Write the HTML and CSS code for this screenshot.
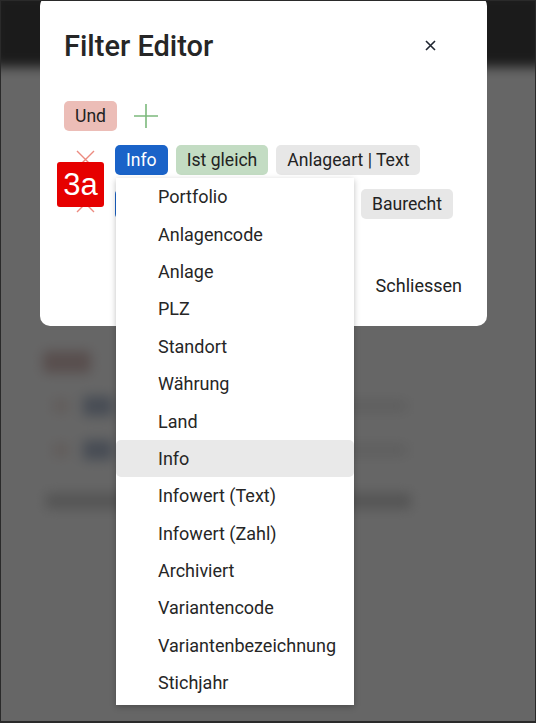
FILE: index.html
```html
<!DOCTYPE html>
<html lang="de">
<head>
    <meta charset="UTF-8">
    <title>Filter Editor</title>
    <link rel="stylesheet" href="styles.css">
</head>
<body>

<div class="frame">

    <!-- page behind the dialog, blurred and dimmed -->
    <div class="page">
        <div class="page-header"></div>
        <div class="page-body">
            <div class="ghost-chip"></div>
            <div class="ghost-row">
                <span class="ghost-dot"></span>
                <span class="ghost-blue"></span>
                <span class="ghost-text"></span>
            </div>
            <div class="ghost-row">
                <span class="ghost-dot"></span>
                <span class="ghost-blue"></span>
                <span class="ghost-text"></span>
            </div>
            <div class="ghost-bar"></div>
        </div>
    </div>
    <div class="overlay"></div>

    <div class="dialog">
        <div class="dialog-head">
            <h1 class="dialog-title">Filter Editor</h1>
            <button class="close-btn" aria-label="Schliessen">
                <svg width="11" height="11" viewBox="0 0 11 11">
                    <path d="M1 1 L10 10 M10 1 L1 10" stroke="#1f2530" stroke-width="1.6" fill="none"/>
                </svg>
            </button>
        </div>

        <div class="filter-tree">
            <div class="filter-row">
                <span class="chip chip-and">Und</span>
                <button class="add-btn" aria-label="Hinzufügen">
                    <svg width="26" height="26" viewBox="0 0 26 26">
                        <path d="M13 1 V25 M1 13 H25" stroke="#7cb97c" stroke-width="1.6" fill="none"/>
                    </svg>
                </button>
            </div>

            <div class="filter-row">
                <button class="del-btn" aria-label="Entfernen">
                    <svg width="19" height="19" viewBox="0 0 19 19">
                        <path d="M1 1 L18 18 M18 1 L1 18" stroke="#ec8b80" stroke-width="1.4" fill="none"/>
                    </svg>
                </button>
                <span class="chip chip-field">Info</span>
                <span class="chip chip-op">Ist gleich</span>
                <span class="chip chip-value">Anlageart | Text</span>
            </div>

            <!-- second condition, mostly covered by the open menu -->
            <div class="filter-row">
                <button class="del-btn" aria-label="Entfernen">
                    <svg width="19" height="19" viewBox="0 0 19 19">
                        <path d="M1 1 L18 18 M18 1 L1 18" stroke="#ec8b80" stroke-width="1.4" fill="none"/>
                    </svg>
                </button>
                <span class="chip chip-field chip-covered"></span>
                <span class="chip chip-op chip-wide"></span>
                <span class="chip chip-value">Baurecht</span>
            </div>
        </div>

        <div class="dialog-foot">
            <button class="text-btn">Schliessen</button>
        </div>
    </div>

    <ul class="menu">
        <li class="menu-item">Portfolio</li>
        <li class="menu-item">Anlagencode</li>
        <li class="menu-item">Anlage</li>
        <li class="menu-item">PLZ</li>
        <li class="menu-item">Standort</li>
        <li class="menu-item">Währung</li>
        <li class="menu-item">Land</li>
        <li class="menu-item active">Info</li>
        <li class="menu-item">Infowert (Text)</li>
        <li class="menu-item">Infowert (Zahl)</li>
        <li class="menu-item">Archiviert</li>
        <li class="menu-item">Variantencode</li>
        <li class="menu-item">Variantenbezeichnung</li>
        <li class="menu-item">Stichjahr</li>
    </ul>

    <div class="step-badge">3a</div>

</div>

</body>
</html>
```

FILE: styles.css
```css
* {
    -webkit-box-sizing: border-box;
    -moz-box-sizing: border-box;
    box-sizing: border-box;
}

body {
    margin: 0;
    font-family: Roboto, "Liberation Sans", sans-serif;
    color: #222;
}

button {
    font-family: inherit;
    background: none;
    border: 0;
    padding: 0;
    cursor: pointer;
}

.frame {
    position: relative;
    width: 536px;
    height: 723px;
    overflow: hidden;
    border: 1px solid #2a2a2a;
    border-bottom-width: 2px;
    background: #fff;
}

/* background page */

.page {
    filter: blur(6px);
}

.page-header {
    height: 76px;
    margin: -10px -10px 0;
    background: #454545;
}

.page-body {
    padding: 284px 0 0 42px;
}

.ghost-chip {
    width: 48px;
    height: 22px;
    background: #ddc4c2;
    border-radius: 4px;
}

.ghost-row {
    display: flex;
    align-items: center;
    gap: 14px;
    height: 22px;
    margin-top: 22px;
    padding-left: 10px;
}

.ghost-dot {
    width: 16px;
    height: 14px;
    background: #f4e8e4;
}

.ghost-blue {
    width: 30px;
    height: 20px;
    background: #b4c0d4;
}

.ghost-text {
    width: 280px;
    height: 12px;
    background: #ececec;
}

.ghost-bar {
    width: 365px;
    height: 16px;
    margin-top: 32px;
    margin-left: 3px;
    background: #d4d4d4;
}

.overlay {
    position: absolute;
    inset: 0;
    background: rgba(0, 0, 0, 0.6);
}

/* dialog */

.dialog {
    position: absolute;
    left: 39px;
    top: -5px;
    width: 447px;
    height: 330px;
    background: #fff;
    border-radius: 10px;
    display: flex;
    flex-direction: column;
}

.dialog-head {
    display: flex;
    align-items: center;
    justify-content: space-between;
    padding: 33px 51px 0 24px;
}

.dialog-title {
    margin: 0;
    font-size: 29px;
    line-height: 34px;
    font-weight: 500;
    color: #262626;
}

.close-btn {
    display: flex;
    width: 11px;
    height: 11px;
    margin-top: -1px;
}

.filter-tree {
    display: flex;
    flex-direction: column;
    gap: 14px;
    padding: 38px 24px 0 24px;
}

.filter-row {
    display: flex;
    align-items: center;
    gap: 8px;
    height: 30px;
}

.chip {
    display: inline-flex;
    align-items: center;
    height: 30px;
    padding: 0 11px;
    border-radius: 5px;
    font-size: 17.6px;
    white-space: nowrap;
}

.chip-and {
    background: #ecbdb7;
}

.chip-field {
    background: #1a63c8;
    color: #fff;
}

.chip-covered {
    width: 52px;
}

.chip-op {
    background: #c3dcc3;
}

.chip-wide {
    width: 178px;
}

.chip-value {
    background: #e7e7e7;
}

.add-btn {
    display: flex;
    margin-left: 8px;
}

.del-btn {
    display: flex;
    justify-content: center;
    width: 43px;
    margin-top: -2px;
}

.dialog-foot {
    display: flex;
    justify-content: flex-end;
    margin-top: auto;
    padding: 0 17px 22px 0;
}

.text-btn {
    font-size: 18px;
    color: #222;
    padding: 8px;
    line-height: 20px;
}

/* dropdown */

.menu {
    position: absolute;
    left: 115px;
    top: 177px;
    width: 238px;
    margin: 0;
    padding: 0 0 4px;
    list-style: none;
    background: #fff;
    box-shadow: 0 2px 6px rgba(0, 0, 0, 0.25);
}

.menu-item {
    display: flex;
    align-items: center;
    height: 37.4px;
    padding-left: 42px;
    font-size: 18px;
    color: #262626;
    white-space: nowrap;
}

.menu-item.active {
    background: #e9e9e9;
    border-radius: 5px;
}

/* annotation */

.step-badge {
    position: absolute;
    left: 56px;
    top: 161px;
    width: 47px;
    height: 45px;
    background: #e60000;
    border-radius: 3px;
    color: #fff;
    font-family: "Liberation Sans", Arial, sans-serif;
    font-size: 31px;
    line-height: 45px;
    text-align: center;
}
```
